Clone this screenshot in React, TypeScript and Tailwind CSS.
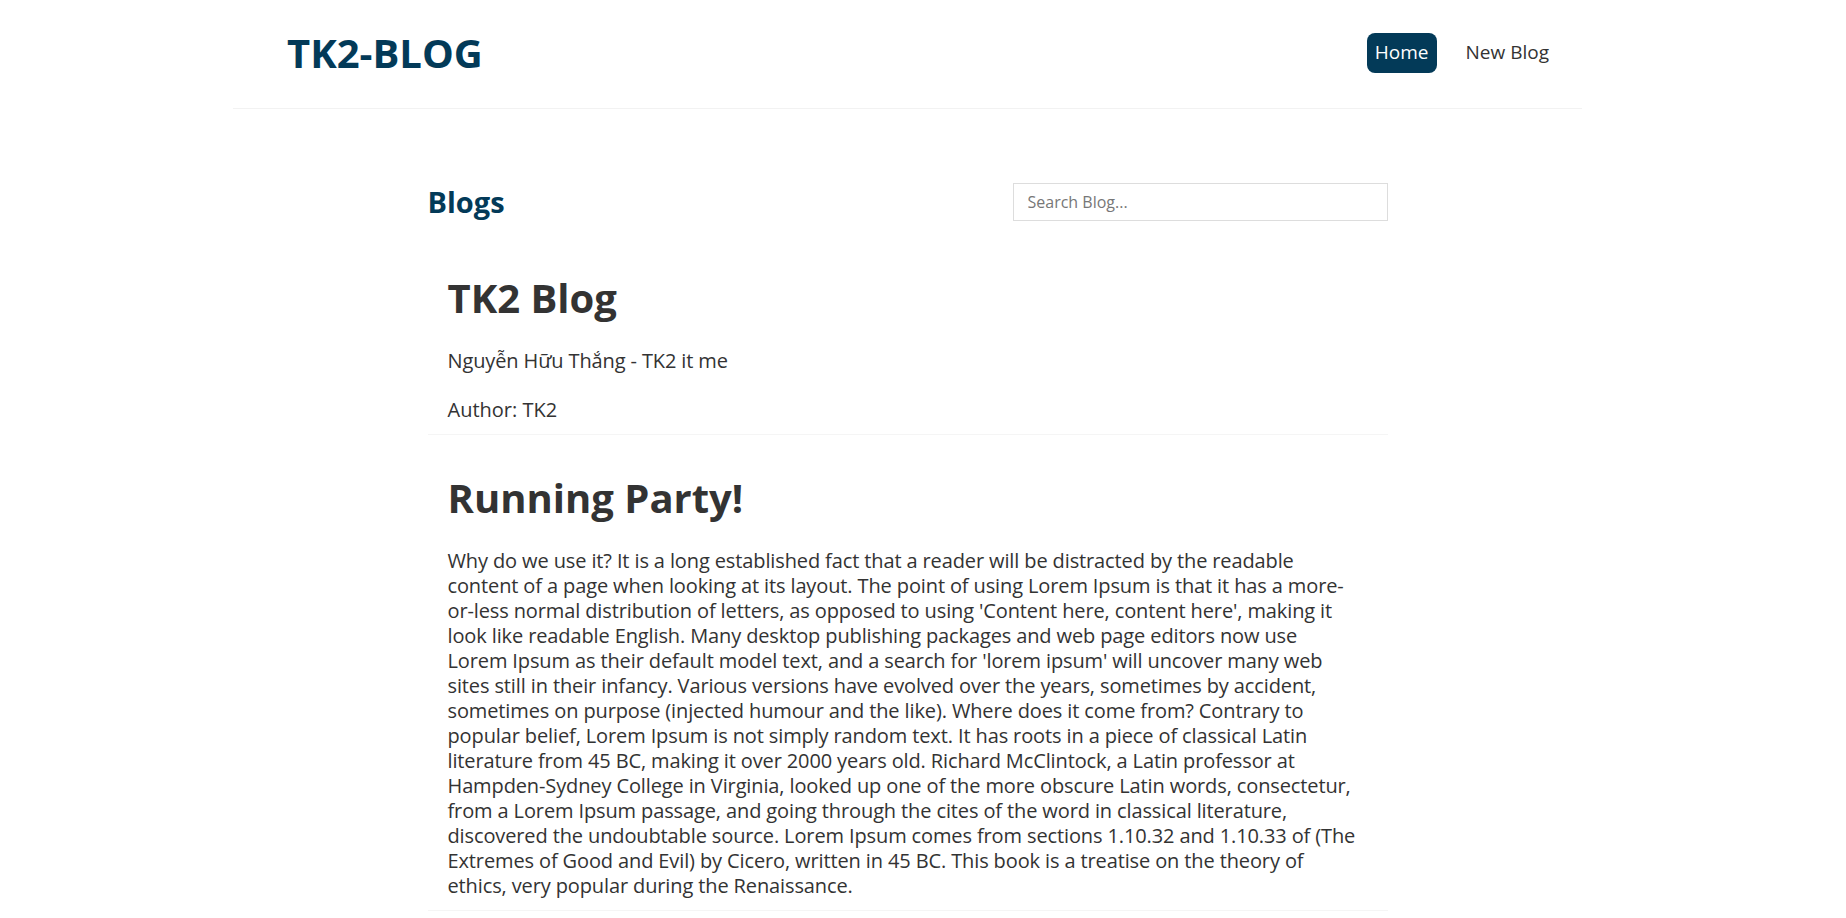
import { useState } from "react";

const blogs = [
  {
    id: 1,
    title: "TK2 Blog",
    body: "Nguyễn Hữu Thắng - TK2 it me",
    author: "TK2",
  },
  {
    id: 2,
    title: "Running Party!",
    body: "Why do we use it? It is a long established fact that a reader will be distracted by the readable content of a page when looking at its layout. The point of using Lorem Ipsum is that it has a more-or-less normal distribution of letters, as opposed to using 'Content here, content here', making it look like readable English. Many desktop publishing packages and web page editors now use Lorem Ipsum as their default model text, and a search for 'lorem ipsum' will uncover many web sites still in their infancy. Various versions have evolved over the years, sometimes by accident, sometimes on purpose (injected humour and the like). Where does it come from? Contrary to popular belief, Lorem Ipsum is not simply random text. It has roots in a piece of classical Latin literature from 45 BC, making it over 2000 years old. Richard McClintock, a Latin professor at Hampden-Sydney College in Virginia, looked up one of the more obscure Latin words, consectetur, from a Lorem Ipsum passage, and going through the cites of the word in classical literature, discovered the undoubtable source. Lorem Ipsum comes from sections 1.10.32 and 1.10.33 of (The Extremes of Good and Evil) by Cicero, written in 45 BC. This book is a treatise on the theory of ethics, very popular during the Renaissance.",
    author: null,
  },
];

const Navbar = () => (
  <nav className="mx-auto flex h-[109px] w-[1349px] items-center justify-between border-b border-[#f2f2f2] pb-[3px] pl-[54px] pr-[33px]">
    <h1 className="text-[40px] font-bold leading-none text-[#033a58]">TK2-BLOG</h1>
    <div className="flex items-center gap-[29px] text-[19px]">
      <a className="flex h-[40px] items-center rounded-[8px] bg-[#033a58] px-[8px] text-white">
        Home
      </a>
      <a className="text-[#333]">New Blog</a>
    </div>
  </nav>
);

const App = () => {
  const [search, setSearch] = useState("");
  const shown = blogs.filter((b) =>
    b.title.toLowerCase().includes(search.toLowerCase())
  );

  return (
    <div className="min-h-screen bg-white pr-[31px] font-['Open_Sans',sans-serif] text-[#333]">
      <Navbar />
      <div className="mx-auto w-[960px]">
        <div className="mt-[71px] flex items-center justify-between">
          <h2 className="text-[29px] font-bold text-[#033a58]">Blogs</h2>
          <input
            value={search}
            onChange={(e) => setSearch(e.target.value)}
            placeholder="Search Blog..."
            className="h-[38px] w-[375px] border border-[#ddd] px-[14px] text-[16px] outline-none placeholder:text-[#777]"
          />
        </div>
        <div className="mt-[11px]">
          {shown.map((blog) => (
            <div
              key={blog.id}
              className="border-b border-[#f5f5f5] pb-[12px] pl-[20px] pr-[31px] pt-[39px]"
            >
              <h2 className="text-[40px] font-bold leading-[48px] text-[#333]">
                {blog.title}
              </h2>
              <p className="mt-[26px] text-[20px] leading-[25px] tracking-[-0.12px]">
                {blog.body}
              </p>
              {blog.author && (
                <p className="mt-[24px] text-[20px] leading-[25px]">
                  Author: {blog.author}
                </p>
              )}
            </div>
          ))}
        </div>
      </div>
    </div>
  );
};

export default App;
